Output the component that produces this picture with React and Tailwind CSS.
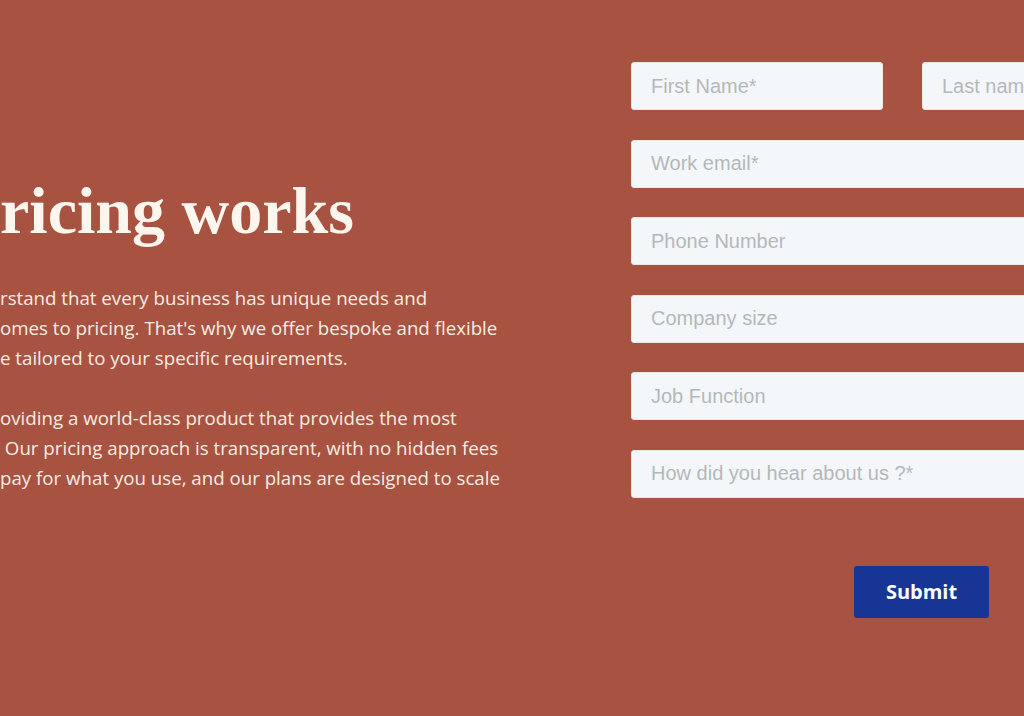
import React from "react";

const para1 = [
  "rstand that every business has unique needs and",
  "omes to pricing. That's why we offer bespoke and flexible",
  "e tailored to your specific requirements.",
];
const para2 = [
  "oviding a world-class product that provides the most",
  " Our pricing approach is transparent, with no hidden fees",
  "pay for what you use, and our plans are designed to scale",
];

function Field({ placeholder, className = "" }) {
  return (
    <input
      type="text"
      placeholder={placeholder}
      className={
        "h-[48px] rounded-[3px] border border-[#ece6e3] bg-[#f4f7fa] px-[19px] text-[20px] text-[#333] placeholder:text-[#b5b7bb] outline-none " +
        className
      }
      style={{ fontFamily: '"Liberation Sans", Arial, sans-serif' }}
    />
  );
}

export default function App() {
  return (
    <div className="w-[1024px] h-[716px] overflow-hidden bg-[#a85241] flex">
      <div className="w-[631px] shrink-0 pt-[170px]">
        <h1
          className="text-[66px] leading-[82px] font-bold text-[#fdf6ee] whitespace-nowrap"
          style={{ fontFamily: '"Liberation Serif", "Times New Roman", serif' }}
        >
          ricing works
        </h1>
        <div
          className="mt-[31px] text-[18.7px] leading-[30px] text-[#f8ece2] whitespace-pre"
          style={{ fontFamily: '"Open Sans", sans-serif' }}
        >
          {para1.map((l, i) => (
            <div key={i}>{l}</div>
          ))}
          <div className="h-[30px]" />
          {para2.map((l, i) => (
            <div key={i}>{l}</div>
          ))}
        </div>
      </div>
      <div className="w-[543px] shrink-0 pt-[62px]">
        <div className="grid grid-cols-2 gap-x-[39px] gap-y-[29.6px]">
          <Field placeholder="First Name*" className="w-full" />
          <Field placeholder="Last name*" className="w-full" />
          <Field placeholder="Work email*" className="col-span-2 w-full" />
          <Field placeholder="Phone Number" className="col-span-2 w-full" />
          <Field placeholder="Company size" className="col-span-2 w-full" />
          <Field placeholder="Job Function" className="col-span-2 w-full" />
          <Field placeholder="How did you hear about us ?*" className="col-span-2 w-full" />
        </div>
        <div className="mt-[68px] pl-[223px]">
          <button
            className="w-[135px] h-[52px] rounded-[3px] bg-[#163594] text-white text-[20px] font-bold"
            style={{ fontFamily: '"Open Sans", sans-serif' }}
          >
            Submit
          </button>
        </div>
      </div>
    </div>
  );
}
